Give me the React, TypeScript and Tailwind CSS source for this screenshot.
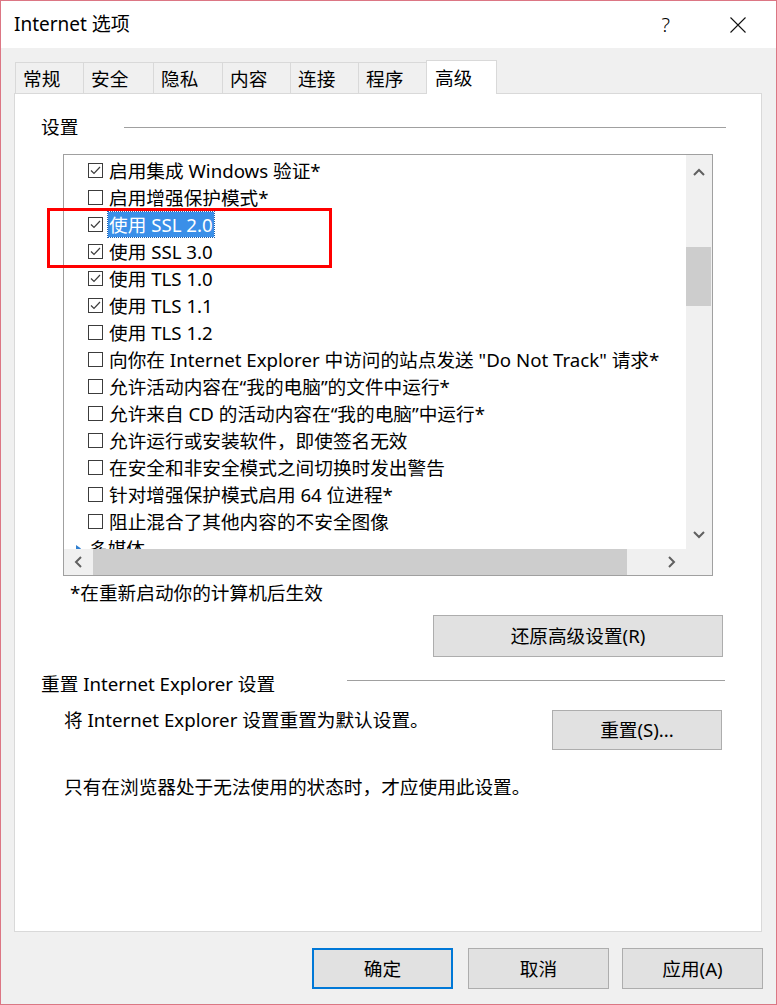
import React from 'react';

type Item = { label: string; checked?: boolean; selected?: boolean };

const items: Item[] = [
  { label: '启用集成 Windows 验证*', checked: true },
  { label: '启用增强保护模式*' },
  { label: '使用 SSL 2.0', checked: true, selected: true },
  { label: '使用 SSL 3.0', checked: true },
  { label: '使用 TLS 1.0', checked: true },
  { label: '使用 TLS 1.1', checked: true },
  { label: '使用 TLS 1.2' },
  { label: '向你在 Internet Explorer 中访问的站点发送 "Do Not Track" 请求*' },
  { label: '允许活动内容在“我的电脑”的文件中运行*' },
  { label: '允许来自 CD 的活动内容在“我的电脑”中运行*' },
  { label: '允许运行或安装软件，即使签名无效' },
  { label: '在安全和非安全模式之间切换时发出警告' },
  { label: '针对增强保护模式启用 64 位进程*' },
  { label: '阻止混合了其他内容的不安全图像' },
];

const tabs = [
  { label: '常规', w: 'w-[68px]' },
  { label: '安全', w: 'w-[70px]' },
  { label: '隐私', w: 'w-[69px]' },
  { label: '内容', w: 'w-[68px]' },
  { label: '连接', w: 'w-[68px]' },
  { label: '程序', w: 'w-[70px]' },
];

function CheckBox({ checked }: { checked?: boolean }) {
  return (
    <span className="w-[15px] h-[15px] border border-[#3c3c3c] bg-white mr-[6px] flex items-center justify-center shrink-0">
      {checked && (
        <svg width="11" height="9" viewBox="0 0 11 9">
          <polyline points="1,4.5 4,7.5 10,1" fill="none" stroke="#3c3c3c" strokeWidth="1.2" />
        </svg>
      )}
    </span>
  );
}

function Chevron({ dir }: { dir: 'up' | 'down' | 'left' | 'right' }) {
  const pts = {
    up: '1,7 6,2 11,7',
    down: '1,2 6,7 11,2',
    left: '7,1 2,6 7,11',
    right: '2,1 7,6 2,11',
  }[dir];
  const vertical = dir === 'up' || dir === 'down';
  return (
    <svg width={vertical ? 12 : 9} height={vertical ? 9 : 12} viewBox={vertical ? '0 0 12 9' : '0 0 9 12'}>
      <polyline points={pts} fill="none" stroke="#606060" strokeWidth="2" />
    </svg>
  );
}

export default function App() {
  return (
    <div className="relative w-[777px] h-[1005px] border border-[#dc7684] bg-[#f0f0f0] flex flex-col overflow-hidden text-black text-[18.67px] font-['Noto_Sans','Noto_Sans_CJK_SC',sans-serif]">
      {/* Title bar */}
      <div className="h-[47px] bg-white flex items-center pl-[13px] pr-[30px] shrink-0">
        <span className="text-[19px]">Internet 选项</span>
        <span className="ml-auto text-[20px] font-light">?</span>
        <svg className="ml-[60px]" width="16" height="16" viewBox="0 0 16 16">
          <path d="M0.5 0.5 L15.5 15.5 M15.5 0.5 L0.5 15.5" stroke="#111" strokeWidth="1.1" />
        </svg>
      </div>

      {/* Tabs */}
      <div className="h-[45px] flex items-end pl-[14px] shrink-0">
        {tabs.map((t, i) => (
          <div
            key={t.label}
            className={`${t.w} h-[31px] border-t border-l border-[#d9d9d9] ${i === tabs.length - 1 ? 'border-r' : ''} flex items-center pl-[7px] pt-[2px]`}
          >
            {t.label}
          </div>
        ))}
        <div className="relative z-10 -ml-[2px] -mb-px w-[71px] h-[34px] bg-white border border-b-0 border-[#d9d9d9] flex items-center pl-[8px]">
          高级
        </div>
      </div>

      {/* Panel */}
      <div className="ml-[13px] w-[748px] h-[839px] bg-white border border-[#d9d9d9] flex flex-col shrink-0">
        <div className="mt-[20px] h-[26px] flex items-center pl-[26px] pr-[35px]">
          <span className="w-[83px]">设置</span>
          <span className="flex-1 h-px bg-[#a0a0a0]" />
        </div>

        {/* List box */}
        <div className="mt-[14px] ml-[48px] w-[650px] h-[422px] border border-[#a0a0a0] flex flex-col">
          <div className="flex-1 flex overflow-hidden">
            <div className="flex-1 overflow-hidden pt-[2px]">
              {items.map((it) => (
                <div key={it.label} className="h-[27px] flex items-center pl-[24px] whitespace-nowrap">
                  <CheckBox checked={it.checked} />
                  {it.selected ? (
                    <span className="h-[25px] flex items-center px-[1px] -ml-px bg-[#3a8fe8] text-white outline-1 outline-dotted outline-[#1c5fae]">
                      {it.label}
                    </span>
                  ) : (
                    <span>{it.label}</span>
                  )}
                </div>
              ))}
              <div className="h-[27px] flex items-center pl-[10px] whitespace-nowrap">
                <svg className="mr-[6px]" width="9" height="9" viewBox="0 0 9 9">
                  <polygon points="2,1 7,4.5 2,8" fill="#2f7fd0" />
                </svg>
                <span>多媒体</span>
              </div>
            </div>
            <div className="w-[26px] bg-[#f0f0f0] flex flex-col">
              <div className="h-[34px] flex items-center justify-center">
                <Chevron dir="up" />
              </div>
              <div className="h-[58px]" />
              <div className="h-[59px] mr-px bg-[#cdcdcd]" />
              <div className="flex-1" />
              <div className="h-[30px] flex items-center justify-center">
                <Chevron dir="down" />
              </div>
            </div>
          </div>
          <div className="h-[26px] flex bg-[#f0f0f0]">
            <div className="w-[29px] flex items-center justify-center">
              <Chevron dir="left" />
            </div>
            <div className="w-[534px] bg-[#cdcdcd]" />
            <div className="flex-1" />
            <div className="w-[30px] flex items-center justify-center">
              <Chevron dir="right" />
            </div>
            <div className="w-[26px]" />
          </div>
        </div>

        <div className="mt-[5px] pl-[55px] leading-[24px]">*在重新启动你的计算机后生效</div>

        <button className="mt-[10px] self-end mr-[38px] w-[290px] h-[42px] bg-[#e1e1e1] border border-[#adadad]">
          还原高级设置(R)
        </button>

        <div className="mt-[14px] h-[26px] flex items-center pl-[26px] pr-[36px]">
          <span className="w-[306px]">重置 Internet Explorer 设置</span>
          <span className="flex-1 h-px bg-[#a0a0a0] mb-[7px]" />
        </div>

        <div className="mt-[11px] flex items-start pl-[49px] pr-[39px]">
          <span className="leading-[24px]">将 Internet Explorer 设置重置为默认设置。</span>
          <button className="ml-auto mt-[2px] w-[170px] h-[40px] bg-[#e1e1e1] border border-[#adadad]">
            重置(S)...
          </button>
        </div>

        <div className="mt-[25px] pl-[49px] leading-[24px]">只有在浏览器处于无法使用的状态时，才应使用此设置。</div>
      </div>

      {/* Dialog buttons */}
      <div className="mt-[16px] flex justify-end pr-[13px]">
        <button className="w-[141px] h-[41px] bg-[#e1e1e1] border-2 border-[#0078d7]">确定</button>
        <button className="ml-[15px] w-[141px] h-[41px] bg-[#e1e1e1] border border-[#adadad]">取消</button>
        <button className="ml-[13px] w-[141px] h-[41px] bg-[#e1e1e1] border border-[#adadad]">应用(A)</button>
      </div>

      {/* Red annotation box */}
      <div className="absolute left-[46px] top-[207px] w-[285px] h-[60px] border-[3px] border-[#ff0000] pointer-events-none" />
    </div>
  );
}
